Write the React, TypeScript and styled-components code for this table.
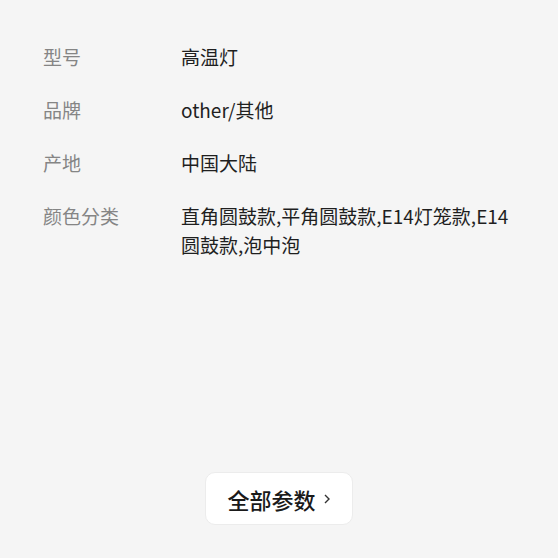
import styled, { createGlobalStyle } from 'styled-components'

const GlobalStyle = createGlobalStyle`
  html, body {
    margin: 0;
    padding: 0;
    background: #f5f5f5;
  }
  body {
    font-family: "Noto Sans CJK SC", "Noto Sans", sans-serif;
  }
`

const Page = styled.div`
  display: flex;
  flex-direction: column;
  height: 558px;
  box-sizing: border-box;
  padding: 42px 43px 33px 43px;
`

const List = styled.div`
  display: flex;
  flex-direction: column;
  gap: 24px;
`

const Row = styled.div`
  display: grid;
  grid-template-columns: 138px 1fr;
  font-size: 19px;
  line-height: 29px;
`

const Label = styled.div`
  color: #858585;
`

const Value = styled.div`
  color: #1f1f1f;
  word-break: break-all;
`

const Footer = styled.div`
  margin-top: auto;
  display: flex;
  justify-content: center;
`

const MoreButton = styled.button`
  display: flex;
  align-items: center;
  gap: 6px;
  height: 53px;
  padding: 0 20px 0 21px;
  background: #fff;
  border: 1px solid #ececec;
  border-radius: 10px;
  font-family: inherit;
  font-size: 22px;
  font-weight: 500;
  color: #1a1a1a;
  cursor: pointer;
`

const params = [
  { label: '型号', value: '高温灯' },
  { label: '品牌', value: 'other/其他' },
  { label: '产地', value: '中国大陆' },
  { label: '颜色分类', value: '直角圆鼓款,平角圆鼓款,E14灯笼款,E14圆鼓款,泡中泡' },
]

function App() {
  return (
    <>
      <GlobalStyle />
      <Page>
        <List>
          {params.map((p) => (
            <Row key={p.label}>
              <Label>{p.label}</Label>
              <Value>{p.value}</Value>
            </Row>
          ))}
        </List>
        <Footer>
          <MoreButton>
            全部参数
            <svg width="10" height="14" viewBox="0 0 10 14" fill="none">
              <path d="M3 3l4 4-4 4" stroke="#333" strokeWidth="1.4" />
            </svg>
          </MoreButton>
        </Footer>
      </Page>
    </>
  )
}

export default App
